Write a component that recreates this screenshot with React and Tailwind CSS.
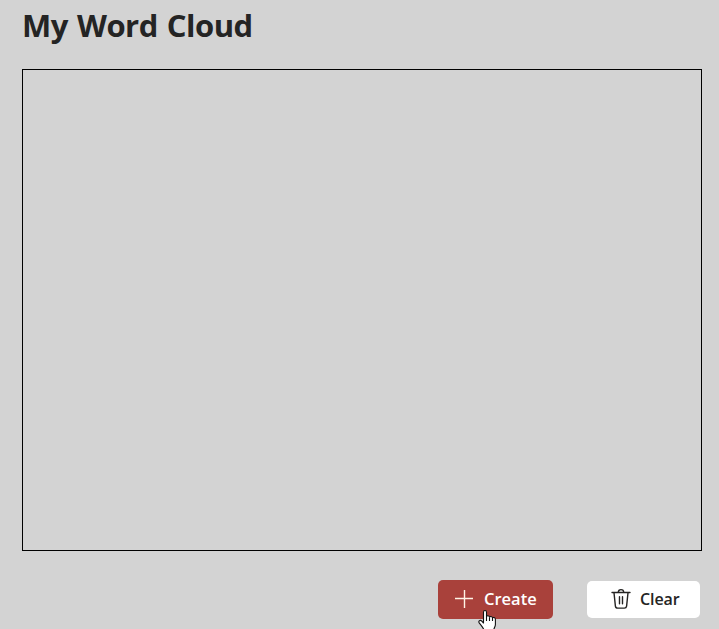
function PlusIcon() {
  return (
    <svg className="block h-5 w-5 shrink-0" viewBox="0 0 20 20" fill="none" stroke="#fff4e6" strokeWidth="1.4">
      <path d="M10.5 1v18M1 9.5h18" />
    </svg>
  );
}

function TrashIcon() {
  return (
    <svg className="block h-[22px] w-5 shrink-0" viewBox="0 0 20 22" fill="none" stroke="#252423" strokeWidth="1.4" strokeLinecap="round" strokeLinejoin="round">
      <path d="M1 4.5h18" />
      <path d="M7.3 4.3a2.7 2.7 0 0 1 5.4 0" />
      <path d="M3 4.7l1.4 13.4a2.3 2.3 0 0 0 2.3 2h6.6a2.3 2.3 0 0 0 2.3-2L17 4.7" />
      <path d="M8.5 8.8v7M11.5 8.8v7" />
    </svg>
  );
}

function HandCursor() {
  return (
    <svg className="absolute left-[478px] top-[609px] h-[23px] w-[19px]" viewBox="0 0 19 23">
      <path
        d="M5.5 14V3.2C5.5 1 8.5 1 8.5 3.2V7.5C8.8 6.3 11.2 6.4 11.5 8.2C12 7 14.2 7.2 14.5 9C15.2 8 17.4 8.4 17.4 10.5V15.5C17.4 18 15.5 19.3 15.5 22.5H6.5C6 19.5 4 17.5 1.2 13.9C-.1 11.8 2.3 10.6 3.8 12.2Z"
        fill="#fff"
        stroke="#111"
        strokeWidth="1.1"
        strokeLinejoin="round"
      />
      <path d="M8.5 7.5v4.5M11.5 8.5v3.5M14.5 9v3" stroke="#111" strokeWidth="1.1" fill="none" />
    </svg>
  );
}

export default function App() {
  return (
    <main className="relative h-[629px] w-[719px] overflow-hidden bg-[#d3d3d3] pl-[22px] font-['Segoe_UI','Open_Sans','Noto_Sans',sans-serif] text-[#242424]">
      <h1 className="flex h-[69px] items-start whitespace-nowrap pt-[3px] text-[31px] leading-[44px] font-bold tracking-[-0.5px] [word-spacing:1.5px]">
        My Word Cloud
      </h1>
      <section className="h-[482px] w-[680px] border border-black" />
      <div className="mt-[29px] flex w-[678px] items-center justify-end gap-[34px]">
        <button className="flex h-[39px] w-[115px] items-center gap-2.5 rounded-[5px] bg-[#a9413b] pb-px pl-4 text-[16.5px] leading-6 font-semibold text-white">
          <PlusIcon />
          <span>Create</span>
        </button>
        <button className="flex h-[37px] w-[113px] items-center gap-[9px] rounded-[5px] bg-white pb-px pl-6 text-base font-semibold tracking-[-0.1px]">
          <TrashIcon />
          <span>Clear</span>
        </button>
      </div>
      <HandCursor />
    </main>
  );
}
